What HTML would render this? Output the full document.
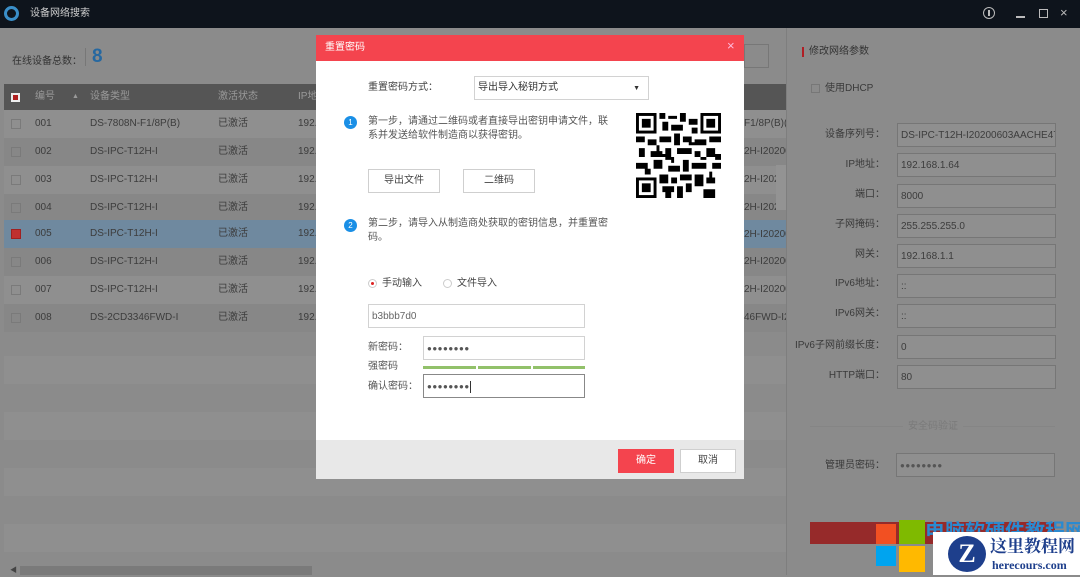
<!DOCTYPE html>
<html><head><meta charset="utf-8">
<style>
*{margin:0;padding:0;box-sizing:border-box}
body{width:1080px;height:575px;overflow:hidden;position:relative;background:#8b8b8b;font-family:"Liberation Sans","Noto Sans CJK SC",sans-serif;font-size:10px;color:#3a3a3a;line-height:12px;white-space:nowrap}
.a{position:absolute}
.top{left:0;top:0;width:1080px;height:28px;background:#0e141c;color:#c8c8c8}
.row{left:4px;width:782px;height:28px}
.row span{position:absolute;top:8px;font-size:10px;line-height:12px;color:#3c3c3c}
.cb{position:absolute;left:7px;top:9px;width:10px;height:10px;border:1px solid #7a7a7a}
.lbl{position:absolute;width:90px;text-align:right;color:#3a3a3a;font-size:10px}
.inp{position:absolute;left:897px;width:159px;height:24px;border:1px solid #767676;background:#8f8f8f;color:#3c3c3c;padding:6px 3px;font-size:10px;white-space:nowrap;overflow:hidden}
.modal{left:316px;top:35px;width:428px;height:444px;background:#fff}
.btn{position:absolute;border:1px solid #cfcfcf;background:#fff;text-align:center;font-size:10px;color:#444}
.mi{position:absolute;border:1px solid #d2d2d2;background:#fff;font-size:10px;color:#666}
.dots{color:#555;font-size:8px;letter-spacing:0.5px;padding-top:6px!important}
</style></head><body>
<div class="a top">
 <div class="a" style="left:4px;top:6px;width:15px;height:15px;border-radius:50%;background:#3a8fc9"></div>
 <div class="a" style="left:7px;top:9px;width:9px;height:9px;border-radius:50%;background:#0e141c"></div>
 <div class="a" style="left:30px;top:8px;font-size:10px;color:#cfcfcf">设备网络搜索</div>
 <div class="a" style="left:983px;top:7px;width:12px;height:12px;border:1.5px solid #bbb;border-radius:50%"></div>
 <div class="a" style="left:988px;top:10px;width:2px;height:6px;background:#bbb"></div>
 <div class="a" style="left:1016px;top:16px;width:9px;height:1.5px;background:#bbb"></div>
 <div class="a" style="left:1039px;top:9px;width:9px;height:9px;border:1.5px solid #bbb"></div>
 <div class="a" style="left:1060px;top:7px;font-size:13px;color:#bbb">×</div>
</div>
<div class="a" style="left:12px;top:56px;font-size:10px;color:#333">在线设备总数：</div>
<div class="a" style="left:85px;top:48px;width:1px;height:18px;background:#777"></div>
<div class="a" style="left:92px;top:47px;font-size:19px;line-height:20px;font-weight:bold;color:#2668a0">8</div>
<div class="a" style="left:744px;top:44px;width:25px;height:24px;border:1px solid #777"></div>
<div class="a" style="left:4px;top:84px;width:782px;height:26px;background:#555"></div>
<div class="a" style="left:11px;top:93px;width:9px;height:9px;background:#eee;border:2px solid #eee"><div style="width:5px;height:5px;background:#b02020"></div></div>
<div class="a" style="left:35px;top:91px;color:#9a9a9a">编号</div>
<div class="a" style="left:72px;top:91px;color:#9a9a9a;font-size:7px">▲</div>
<div class="a" style="left:90px;top:91px;color:#9a9a9a">设备类型</div>
<div class="a" style="left:218px;top:91px;color:#9a9a9a">激活状态</div>
<div class="a" style="left:298px;top:91px;color:#9a9a9a">IP地</div>
<div class="a row" style="top:110px;background:#8f8f8f"><div class="cb"></div><span style="left:31px">001</span><span style="left:86px">DS-7808N-F1/8P(B)</span><span style="left:214px">已激活</span><span style="left:294px">192.</span></div>
<div class="a row" style="top:138px;background:#878787"><div class="cb"></div><span style="left:31px">002</span><span style="left:86px">DS-IPC-T12H-I</span><span style="left:214px">已激活</span><span style="left:294px">192.</span></div>
<div class="a row" style="top:166px;background:#8f8f8f"><div class="cb"></div><span style="left:31px">003</span><span style="left:86px">DS-IPC-T12H-I</span><span style="left:214px">已激活</span><span style="left:294px">192.</span></div>
<div class="a row" style="top:194px;background:#878787"><div class="cb"></div><span style="left:31px">004</span><span style="left:86px">DS-IPC-T12H-I</span><span style="left:214px">已激活</span><span style="left:294px">192.</span></div>
<div class="a row" style="top:220px;background:#6f899f"><div class="cb" style="background:#c03030;border-color:#a02020"></div><span style="left:31px">005</span><span style="left:86px">DS-IPC-T12H-I</span><span style="left:214px">已激活</span><span style="left:294px">192.</span></div>
<div class="a row" style="top:248px;background:#878787"><div class="cb"></div><span style="left:31px">006</span><span style="left:86px">DS-IPC-T12H-I</span><span style="left:214px">已激活</span><span style="left:294px">192.</span></div>
<div class="a row" style="top:276px;background:#8f8f8f"><div class="cb"></div><span style="left:31px">007</span><span style="left:86px">DS-IPC-T12H-I</span><span style="left:214px">已激活</span><span style="left:294px">192.</span></div>
<div class="a row" style="top:304px;background:#878787"><div class="cb"></div><span style="left:31px">008</span><span style="left:86px">DS-2CD3346FWD-I</span><span style="left:214px">已激活</span><span style="left:294px">192.</span></div>
<div class="a row" style="top:356px;background:#8f8f8f"></div>
<div class="a row" style="top:412px;background:#8f8f8f"></div>
<div class="a row" style="top:468px;background:#8f8f8f"></div>
<div class="a row" style="top:524px;background:#8f8f8f"></div>
<div class="a" style="left:744px;top:110px;width:42px;height:224px;overflow:hidden;font-size:10px;color:#3c3c3c;line-height:28px">
 <div style="line-height:28px">F1/8P(B)(</div><div style="line-height:28px">2H-I20200</div><div style="line-height:28px">2H-I202</div><div style="line-height:28px">2H-I202</div><div style="line-height:26px">2H-I20200</div><div style="line-height:28px">2H-I20200</div><div style="line-height:28px">2H-I20200</div><div style="line-height:28px">46FWD-I2</div></div>
<div class="a" style="left:776px;top:165px;width:10px;height:45px;background:#939393"></div>
<div class="a" style="left:20px;top:566px;width:292px;height:9px;background:#7a7a7a"></div>
<div class="a" style="left:10px;top:565px;font-size:7px;color:#444">◀</div>
<!-- right panel -->
<div class="a" style="left:786px;top:28px;width:1px;height:547px;background:#7e7e7e"></div>
<div class="a" style="left:802px;top:47px;width:2px;height:10px;background:#b01e24"></div>
<div class="a" style="left:809px;top:46px;font-size:10px;color:#333">修改网络参数</div>
<div class="a" style="left:811px;top:84px;width:9px;height:9px;border:1px solid #777"></div>
<div class="a" style="left:825px;top:83px;color:#3a3a3a">使用DHCP</div>
<div class="lbl" style="left:795px;top:129px">设备序列号：</div><div class="inp" style="top:123px">DS-IPC-T12H-I20200603AACHE47</div>
<div class="lbl" style="left:795px;top:159px">IP地址：</div><div class="inp" style="top:153px">192.168.1.64</div>
<div class="lbl" style="left:795px;top:189px">端口：</div><div class="inp" style="top:184px">8000</div>
<div class="lbl" style="left:795px;top:219px">子网掩码：</div><div class="inp" style="top:214px">255.255.255.0</div>
<div class="lbl" style="left:795px;top:249px">网关：</div><div class="inp" style="top:244px">192.168.1.1</div>
<div class="lbl" style="left:795px;top:278px">IPv6地址：</div><div class="inp" style="top:274px">::</div>
<div class="lbl" style="left:795px;top:308px">IPv6网关：</div><div class="inp" style="top:304px">::</div>
<div class="lbl" style="left:780px;top:340px;width:105px">IPv6子网前缀长度：</div><div class="inp" style="top:335px">0</div>
<div class="lbl" style="left:795px;top:370px">HTTP端口：</div><div class="inp" style="top:365px">80</div>
<div class="a" style="left:810px;top:426px;width:245px;height:1px;background:#858585"></div>
<div class="a" style="left:903px;top:421px;padding:0 5px;background:#8b8b8b;color:#7a7a7a">安全码验证</div>
<div class="lbl" style="left:795px;top:460px">管理员密码：</div><div class="inp dots" style="top:453px;left:896px">●●●●●●●●</div>
<!-- watermark -->
<div class="a" style="left:810px;top:522px;width:245px;height:22px;background:#962a2a"></div>
<div class="a" style="left:925px;top:521px;font-size:20px;line-height:22px;font-weight:bold;color:#2a8ad0">电脑软硬件教程网</div>
<div class="a" style="left:876px;top:524px;width:20px;height:20px;background:#f25022"></div>
<div class="a" style="left:899px;top:520px;width:26px;height:24px;background:#7fba00"></div>
<div class="a" style="left:876px;top:546px;width:20px;height:20px;background:#00a4ef"></div>
<div class="a" style="left:899px;top:546px;width:26px;height:26px;background:#ffb900"></div>
<div class="a" style="left:933px;top:532px;width:147px;height:43px;background:#fff"></div>
<div class="a" style="left:948px;top:536px;width:38px;height:36px;border-radius:50%;background:#1e3f8c;color:#fff;font-size:26px;font-weight:bold;text-align:center;line-height:36px;font-family:'Liberation Serif',serif">Z</div>
<div class="a" style="left:990px;top:535px;font-size:17px;line-height:20px;font-weight:bold;color:#1e3f8c;font-family:'Noto Serif CJK SC',serif">这里教程网</div>
<div class="a" style="left:992px;top:558px;font-size:12px;line-height:14px;font-weight:bold;color:#1e3f8c;font-family:'Liberation Serif',serif">herecours.com</div>
<!-- modal -->
<div class="a modal">
 <div class="a" style="left:0;top:0;width:428px;height:26px;background:#f4444e"></div>
 <div class="a" style="left:9px;top:7px;color:#fff;font-size:10px">重置密码</div>
 <div class="a" style="left:411px;top:5px;color:#fbd;font-size:13px">×</div>
 <div class="a" style="left:52px;top:47px;color:#444">重置密码方式：</div>
 <div class="mi" style="left:158px;top:41px;width:175px;height:24px;padding:5px 3px;color:#333">导出导入秘钥方式<span style="position:absolute;right:8px;top:6px;font-size:7px">▼</span></div>
 <div class="a" style="left:28px;top:81px;width:13px;height:13px;border-radius:50%;background:#1a8fe6;color:#fff;font-size:8px;text-align:center;line-height:13px">1</div>
 <div class="a" style="left:52px;top:80px;width:245px;color:#555;line-height:14px;white-space:normal">第一步，请通过二维码或者直接导出密钥申请文件，联系并发送给软件制造商以获得密钥。</div>
 <div class="btn" style="left:52px;top:134px;width:72px;height:24px;line-height:22px">导出文件</div>
 <div class="btn" style="left:147px;top:134px;width:72px;height:24px;line-height:22px">二维码</div>
 <svg class="a" style="left:320px;top:78px" width="85" height="85" viewBox="0 0 29 29">
  <rect width="29" height="29" fill="#fff"/>
  <g fill="#000"><rect x="0" y="0" width="7" height="7"/><rect x="22" y="0" width="7" height="7"/><rect x="0" y="22" width="7" height="7"/></g>
  <g fill="#fff"><rect x="1" y="1" width="5" height="5"/><rect x="23" y="1" width="5" height="5"/><rect x="1" y="23" width="5" height="5"/></g>
  <g fill="#000"><rect x="2" y="2" width="3" height="3"/><rect x="24" y="2" width="3" height="3"/><rect x="2" y="24" width="3" height="3"/>
  <path d="M8 0h2v2h-2zM11 1h3v1h-3zM15 0h2v3h-2zM18 2h3v2h-3zM9 3h2v3h-2zM12 4h4v2h-4zM19 5h2v2h-2zM0 8h3v2h-3zM4 9h3v2h-3zM8 8h4v2h-4zM13 7h2v4h-2zM16 8h3v2h-3zM20 9h4v2h-4zM25 8h4v2h-4zM1 12h2v3h-2zM5 13h4v2h-4zM10 12h2v4h-2zM14 12h5v2h-5zM20 13h2v2h-2zM24 12h3v3h-3zM0 17h4v2h-4zM6 16h3v3h-3zM11 18h4v2h-4zM16 16h2v4h-2zM19 17h5v2h-5zM26 17h3v2h-3zM8 21h3v3h-3zM12 22h2v2h-2zM15 21h4v2h-4zM20 21h3v4h-3zM24 22h3v2h-3zM9 25h4v2h-4zM14 25h2v4h-2zM17 24h2v3h-2zM23 26h4v3h-4zM10 27h2v2h-2zM3 19h2v2h-2zM27 14h2v2h-2zM9 14h1v1h-1zM18 10h2v1h-2zM7 11h1v2h-1zM22 15h2v1h-2zM12 15h1v2h-1zM25 20h1v2h-1z"/></g>
 </svg>
 <div class="a" style="left:28px;top:184px;width:13px;height:13px;border-radius:50%;background:#1a8fe6;color:#fff;font-size:8px;text-align:center;line-height:13px">2</div>
 <div class="a" style="left:52px;top:182px;width:245px;color:#555;line-height:14px;white-space:normal">第二步，请导入从制造商处获取的密钥信息，并重置密码。</div>
 <div class="a" style="left:52px;top:244px;width:9px;height:9px;border:1px solid #ccc;border-radius:50%"><div style="margin:2px;width:3px;height:3px;border-radius:50%;background:#d22"></div></div>
 <div class="a" style="left:66px;top:243px;color:#444">手动输入</div>
 <div class="a" style="left:127px;top:244px;width:9px;height:9px;border:1px solid #ccc;border-radius:50%"></div>
 <div class="a" style="left:141px;top:243px;color:#444">文件导入</div>
 <div class="mi" style="left:52px;top:269px;width:217px;height:24px;padding:6px 3px;color:#666">b3bbb7d0</div>
 <div class="a" style="left:52px;top:307px;color:#555">新密码：</div>
 <div class="mi dots" style="left:107px;top:301px;width:162px;height:24px;padding:6px 3px">●●●●●●●●</div>
 <div class="a" style="left:52px;top:326px;color:#555">强密码</div>
 <div class="a" style="left:107px;top:331px;width:53px;height:3px;background:#92c16a"></div>
 <div class="a" style="left:162px;top:331px;width:53px;height:3px;background:#92c16a"></div>
 <div class="a" style="left:217px;top:331px;width:52px;height:3px;background:#92c16a"></div>
 <div class="a" style="left:52px;top:346px;color:#555">确认密码：</div>
 <div class="mi dots" style="left:107px;top:339px;width:162px;height:24px;padding:6px 3px;border-color:#888">●●●●●●●●<span style="display:inline-block;width:1px;height:12px;background:#333;vertical-align:middle"></span></div>
 <div class="a" style="left:0;top:405px;width:428px;height:39px;background:#e8e8e8"></div>
 <div class="a" style="left:302px;top:414px;width:56px;height:24px;background:#f4444e;color:#fff;text-align:center;line-height:24px">确定</div>
 <div class="btn" style="left:364px;top:414px;width:56px;height:24px;line-height:22px">取消</div>
</div>
</body></html>
